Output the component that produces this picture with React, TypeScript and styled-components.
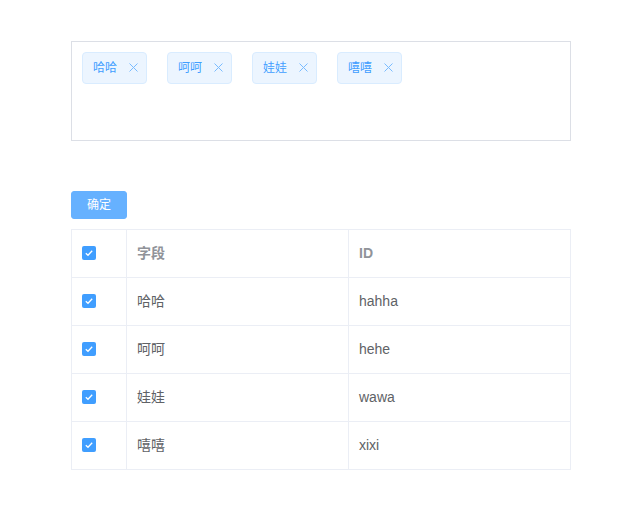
import React from "react";
import styled, { createGlobalStyle } from "styled-components";

const Global = createGlobalStyle`
  html, body { margin: 0; padding: 0; background: #fff; }
  body { font-family: "Liberation Sans", Arial, "Noto Sans CJK SC", sans-serif; }
`;

const Page = styled.div`
  padding: 41px 0 0 71px;
  width: 500px;
`;

const TagBox = styled.div`
  width: 500px;
  height: 100px;
  box-sizing: border-box;
  border: 1px solid #dcdfe6;
  padding: 10px;
  display: flex;
  align-items: flex-start;
  gap: 20px;
`;

const Tag = styled.span`
  display: inline-flex;
  align-items: center;
  height: 32px;
  box-sizing: border-box;
  padding: 0 10px 1px;
  background: #ecf5ff;
  border: 1px solid #d9ecff;
  border-radius: 4px;
  color: #409eff;
  font-size: 12px;
  line-height: 1;
  white-space: nowrap;
`;

const Close = styled.span`
  width: 16px;
  height: 16px;
  margin: 0 -5px 0 8px;
  display: inline-flex;
  align-items: center;
  justify-content: center;
`;

const Button = styled.button`
  margin-top: 50px;
  width: 56px;
  height: 28px;
  border: 1px solid #66b1ff;
  background: #66b1ff;
  color: #fff;
  font-size: 12px;
  line-height: 1;
  border-radius: 3px;
  padding: 0 0 1px;
  font-family: inherit;
  display: flex;
  align-items: center;
  justify-content: center;
`;

const Table = styled.div`
  margin-top: 10px;
  width: 500px;
  display: grid;
  grid-template-columns: 55px 222px 1fr;
  border-top: 1px solid #ebeef5;
  border-left: 1px solid #ebeef5;
  box-sizing: border-box;
`;

const Cell = styled.div<{ $head?: boolean }>`
  height: 48px;
  box-sizing: border-box;
  border-right: 1px solid #ebeef5;
  border-bottom: 1px solid #ebeef5;
  padding: 0 10px 1px;
  display: flex;
  align-items: center;
  font-size: 14px;
  line-height: 1;
  color: ${(p) => (p.$head ? "#909399" : "#606266")};
  font-weight: ${(p) => (p.$head ? 700 : 400)};
`;

const Check = styled.span`
  width: 14px;
  height: 14px;
  border-radius: 2px;
  background: #409eff;
  display: inline-flex;
  align-items: center;
  justify-content: center;
`;

const CloseIcon = () => (
  <svg width="9" height="9" viewBox="0 0 9 9">
    <path d="M0.5 0.5 L8.5 8.5 M8.5 0.5 L0.5 8.5" stroke="#79bbff" strokeWidth="1" fill="none" />
  </svg>
);

const CheckIcon = () => (
  <svg width="14" height="14" viewBox="0 0 14 14">
    <path d="M3.8 7.2 L6 9.3 L10.2 4.8" stroke="#fff" strokeWidth="1.3" fill="none" />
  </svg>
);

const tags = ["哈哈", "呵呵", "娃娃", "嘻嘻"];
const rows = [
  ["哈哈", "hahha"],
  ["呵呵", "hehe"],
  ["娃娃", "wawa"],
  ["嘻嘻", "xixi"],
];

export default function App() {
  return (
    <>
      <Global />
      <Page>
        <TagBox>
          {tags.map((t) => (
            <Tag key={t}>
              {t}
              <Close>
                <CloseIcon />
              </Close>
            </Tag>
          ))}
        </TagBox>
        <Button>确定</Button>
        <Table>
          <Cell $head>
            <Check>
              <CheckIcon />
            </Check>
          </Cell>
          <Cell $head>字段</Cell>
          <Cell $head>ID</Cell>
          {rows.map(([a, b]) => (
            <React.Fragment key={b}>
              <Cell>
                <Check>
                  <CheckIcon />
                </Check>
              </Cell>
              <Cell>{a}</Cell>
              <Cell>{b}</Cell>
            </React.Fragment>
          ))}
        </Table>
      </Page>
    </>
  );
}
